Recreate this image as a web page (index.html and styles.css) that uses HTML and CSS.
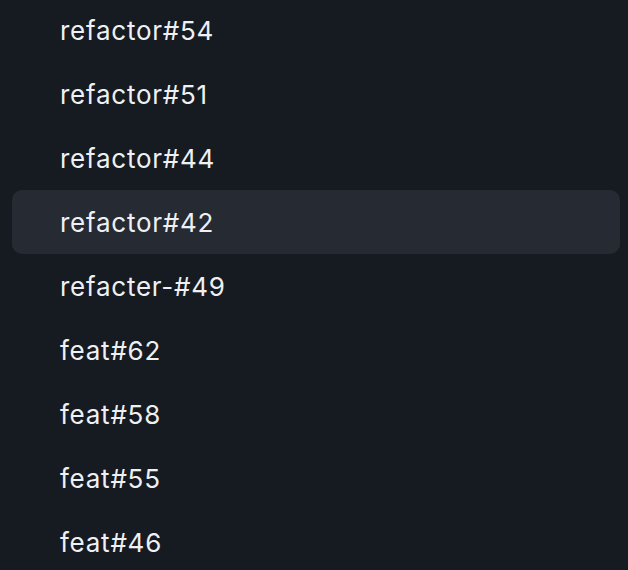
FILE: index.html
```html
<!DOCTYPE html>
<html>
<head>
<meta charset="utf-8">
<link rel="stylesheet" href="styles.css">
</head>
<body>
<ul class="list">
  <li class="item">refactor#54</li>
  <li class="item">refactor#51</li>
  <li class="item">refactor#44</li>
  <li class="item active">refactor#42</li>
  <li class="item">refacter-#49</li>
  <li class="item">feat#62</li>
  <li class="item">feat#58</li>
  <li class="item">feat#55</li>
  <li class="item">feat#46</li>
</ul>
</body>
</html>
```
FILE: styles.css
```css
html, body {
  margin: 0;
  padding: 0;
  background: #161a21;
  height: 100%;
  overflow: hidden;
}
.list {
  list-style: none;
  margin: -2px 0 0 0;
  padding: 0 8px 0 12px;
  display: flex;
  flex-direction: column;
  font-family: Inter, "Noto Sans", sans-serif;
  font-size: 26px;
  font-weight: 400;
  letter-spacing: 0.75px;
  color: #eef0f3;
}
.item {
  height: 64px;
  display: flex;
  align-items: center;
  padding-left: 48px;
  border-radius: 10px;
}
.item.active {
  background: #262a33;
}
```
